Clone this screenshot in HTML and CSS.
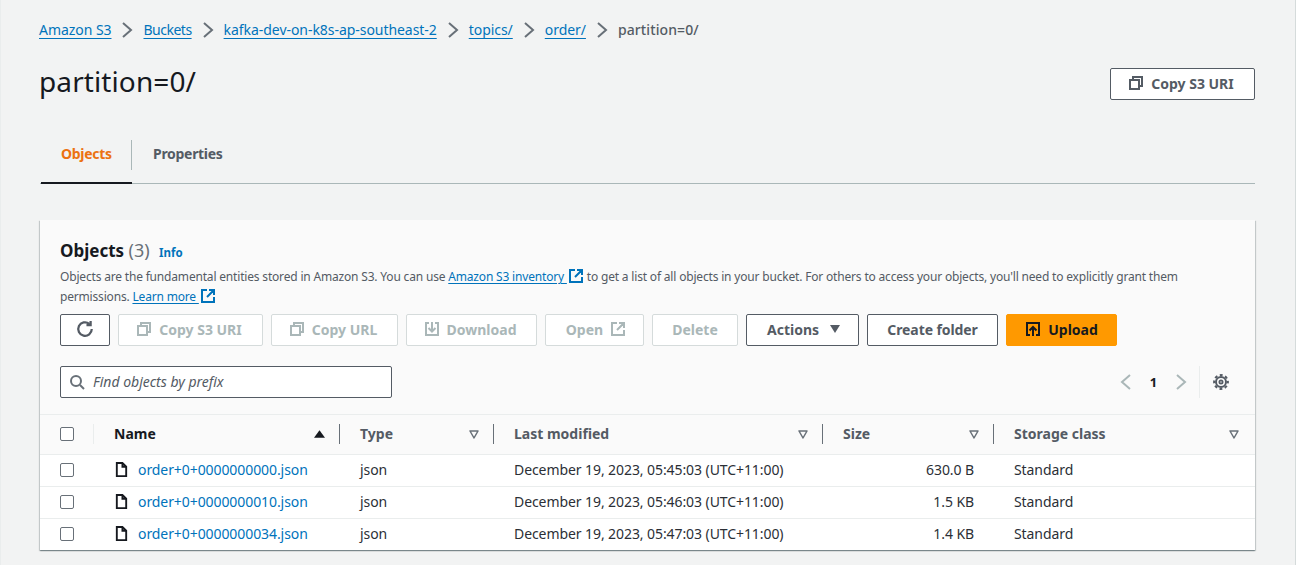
FILE: index.html
```html
<!DOCTYPE html>
<html lang="en">
<head>
    <meta charset="UTF-8">
    <title>partition=0/ - S3 bucket</title>
    <link rel="stylesheet" href="styles.css">
</head>
<body>
    <svg class="sprites" width="0" height="0" aria-hidden="true">
        <symbol id="i-copy" viewBox="0 0 16 16"><path d="M5 5V2h9v9h-3M2 5h9v9H2z" fill="none" stroke="currentColor" stroke-width="2"/></symbol>
        <symbol id="i-ext" viewBox="0 0 16 16"><path d="M7 2H2v12h12V9M9 2h5v5M14 2L7 9" fill="none" stroke="currentColor" stroke-width="2"/></symbol>
        <symbol id="i-down" viewBox="0 0 16 16"><path d="M5 2H2v12h12V2h-3M8 1v9M4.5 7L8 10.5 11.5 7" fill="none" stroke="currentColor" stroke-width="2"/></symbol>
        <symbol id="i-chev" viewBox="0 0 16 16"><path d="M4 1l8 7-8 7" fill="none" stroke="currentColor" stroke-width="2"/></symbol>
        <symbol id="i-sort" viewBox="0 0 12 12"><path d="M2 3h8L6 10z" fill="none" stroke="currentColor" stroke-width="1.5" stroke-linejoin="round"/></symbol>
        <symbol id="i-file" viewBox="0 0 16 16"><path d="M9 1H3v14h10V5zM9 1v4h4" fill="none" stroke="currentColor" stroke-width="2"/></symbol>
    </svg>

    <main class="page">
        <nav class="crumbs">
            <a href="#">Amazon S3</a>
            <svg class="crumb-sep"><use href="#i-chev"/></svg>
            <a class="crumb-narrow" href="#">Buckets</a>
            <svg class="crumb-sep"><use href="#i-chev"/></svg>
            <a href="#">kafka-dev-on-k8s-ap-southeast-2</a>
            <svg class="crumb-sep"><use href="#i-chev"/></svg>
            <a href="#">topics/</a>
            <svg class="crumb-sep"><use href="#i-chev"/></svg>
            <a href="#">order/</a>
            <svg class="crumb-sep"><use href="#i-chev"/></svg>
            <span class="crumb-current">partition=0/</span>
        </nav>

        <header class="title-row">
            <h1>partition=0/</h1>
            <button class="btn btn-title"><svg class="icon"><use href="#i-copy"/></svg>Copy S3 URI</button>
        </header>

        <div class="tabs">
            <a class="tab tab-active" href="#">Objects</a>
            <a class="tab" href="#">Properties</a>
        </div>

        <section class="card">
            <div class="card-head">
                <h2>Objects <span class="count">(3)</span> <a class="info" href="#">Info</a></h2>
                <p class="desc">Objects are the fundamental entities stored in Amazon S3. You can use <a href="#">Amazon S3 inventory <svg class="icon-ext"><use href="#i-ext"/></svg></a> to get a list of all objects in your bucket. For others to access your objects, you'll need to explicitly grant them<br>permissions. <a href="#">Learn more <svg class="icon-ext"><use href="#i-ext"/></svg></a></p>

                <div class="actions">
                    <button class="btn btn-refresh" aria-label="Refresh">
                        <svg class="icon-refresh" viewBox="0 0 16 16"><path d="M14 8a6 6 0 1 1-2.2-4.6M13 0.8V4.5H9.3" fill="none" stroke="currentColor" stroke-width="2"/></svg>
                    </button>
                    <button class="btn btn-off w-uri"><svg class="icon"><use href="#i-copy"/></svg>Copy S3 URI</button>
                    <button class="btn btn-off w-url"><svg class="icon"><use href="#i-copy"/></svg>Copy URL</button>
                    <button class="btn btn-off w-dl"><svg class="icon"><use href="#i-down"/></svg>Download</button>
                    <button class="btn btn-off w-open">Open<svg class="icon icon-after"><use href="#i-ext"/></svg></button>
                    <button class="btn btn-off w-del">Delete</button>
                    <button class="btn w-act">Actions<span class="caret"></span></button>
                    <button class="btn w-folder">Create folder</button>
                    <button class="btn btn-primary w-up">
                        <svg class="icon" viewBox="0 0 16 16"><path d="M5 14H2V2h12v12h-3M8 15V6M4.5 9.5L8 6l3.5 3.5" fill="none" stroke="currentColor" stroke-width="2"/></svg>Upload
                    </button>
                </div>

                <div class="filter-row">
                    <label class="search">
                        <svg class="icon-search" viewBox="0 0 16 16"><path d="M11 11l4 4" stroke="currentColor" stroke-width="2" fill="none"/><circle cx="7" cy="7" r="5" fill="none" stroke="currentColor" stroke-width="2"/></svg>
                        <span>Find objects by prefix</span>
                    </label>
                    <div class="pager">
                        <svg class="pager-arrow flip"><use href="#i-chev"/></svg>
                        <span class="pager-num">1</span>
                        <svg class="pager-arrow"><use href="#i-chev"/></svg>
                        <span class="pager-line"></span>
                        <svg class="gear" viewBox="0 0 16 16" fill="none" stroke="currentColor"><circle cx="8" cy="8" r="5" stroke-width="2"/><circle cx="8" cy="8" r="6.9" stroke-width="2" stroke-dasharray="2.9 2.52" stroke-dashoffset="1.45"/><circle cx="8" cy="8" r="1.6" stroke-width="1.8"/></svg>
                    </div>
                </div>
            </div>

            <table class="objects">
                <colgroup>
                    <col class="c-check"><col class="c-name"><col class="c-type"><col class="c-date"><col class="c-size"><col class="c-class">
                </colgroup>
                <thead>
                    <tr>
                        <th class="cell-check"><span class="check"></span></th>
                        <th class="th-name"><div class="th-inner">Name<svg class="sort-up" viewBox="0 0 12 8"><path d="M6 0l6 8H0z" fill="currentColor"/></svg></div></th>
                        <th><div class="th-inner th-muted">Type<svg class="sort"><use href="#i-sort"/></svg></div></th>
                        <th><div class="th-inner th-muted">Last modified<svg class="sort"><use href="#i-sort"/></svg></div></th>
                        <th><div class="th-inner th-muted">Size<svg class="sort"><use href="#i-sort"/></svg></div></th>
                        <th class="th-last"><div class="th-inner th-muted">Storage class<svg class="sort"><use href="#i-sort"/></svg></div></th>
                    </tr>
                </thead>
                <tbody>
                    <tr>
                        <td class="cell-check"><span class="check"></span></td>
                        <td class="td-name"><svg class="file"><use href="#i-file"/></svg><a href="#">order+0+0000000000.json</a></td>
                        <td>json</td>
                        <td>December 19, 2023, 05:45:03 (UTC+11:00)</td>
                        <td class="num">630.0 B</td>
                        <td>Standard</td>
                    </tr>
                    <tr>
                        <td class="cell-check"><span class="check"></span></td>
                        <td class="td-name"><svg class="file"><use href="#i-file"/></svg><a href="#">order+0+0000000010.json</a></td>
                        <td>json</td>
                        <td>December 19, 2023, 05:46:03 (UTC+11:00)</td>
                        <td class="num">1.5 KB</td>
                        <td>Standard</td>
                    </tr>
                    <tr>
                        <td class="cell-check"><span class="check"></span></td>
                        <td class="td-name"><svg class="file"><use href="#i-file"/></svg><a href="#">order+0+0000000034.json</a></td>
                        <td>json</td>
                        <td>December 19, 2023, 05:47:03 (UTC+11:00)</td>
                        <td class="num">1.4 KB</td>
                        <td>Standard</td>
                    </tr>
                </tbody>
            </table>
        </section>
    </main>
</body>
</html>
```

FILE: styles.css
```css
/* Page */
html, body {
    margin: 0;
    padding: 0;
}
body {
    background-color: #f2f3f3;
    color: #16191f;
    font-family: "Noto Sans", Arial, sans-serif;
    font-size: 14px;
    line-height: 20px;
    height: 565px;
    overflow: hidden;
    box-sizing: border-box;
    border-left: 1px solid #eaeded;
    border-right: 1px solid #d5dbdb;
}
a {
    color: #0073bb;
}
.sprites {
    display: block;
}
.page {
    padding: 20px 40px 0 39px;
}

/* Breadcrumbs */
.crumbs {
    display: flex;
    align-items: center;
    height: 20px;
    margin-left: -1px;
    font-size: 14px;
    letter-spacing: -0.05px;
}
.crumbs a {
    text-underline-offset: 3px;
}
.crumbs .crumb-narrow {
    letter-spacing: -0.5px;
}
.crumb-sep {
    width: 16px;
    height: 16px;
    margin: 0 8px;
    color: #687078;
}
.crumb-current {
    color: #545b64;
    font-weight: 500;
    letter-spacing: 0.1px;
}

/* Title */
.title-row {
    display: flex;
    justify-content: space-between;
    align-items: center;
    margin-top: 28px;
    height: 32px;
}
h1 {
    margin: 0 0 6px -1px;
    font-size: 28px;
    font-weight: 400;
    line-height: 36px;
    letter-spacing: 0.1px;
}

/* Buttons */
.btn {
    display: inline-flex;
    align-items: center;
    justify-content: center;
    box-sizing: border-box;
    height: 32px;
    padding: 0 0 2px;
    border: 1px solid #545b64;
    border-radius: 2px;
    background-color: #fff;
    color: #545b64;
    font-family: inherit;
    font-size: 14px;
    font-weight: 700;
}
.btn-title, .w-uri, .w-url, .w-dl {
    padding-right: 3px;
}
.btn-title {
    width: 145px;
}
.btn-off {
    border-color: #d5dbdb;
    color: #aab7b8;
    background-color: #fff;
}
.btn-primary {
    background-color: #ff9900;
    border-color: #ff9900;
    color: #16191f;
}
.icon {
    width: 16px;
    height: 16px;
    margin-right: 7px;
}
.icon-after {
    margin: 0 0 0 7px;
}

/* Tabs */
.tabs {
    display: flex;
    align-items: center;
    margin-top: 25px;
    height: 58px;
    border-bottom: 1px solid #aab7b8;
}
.tab {
    display: flex;
    align-items: center;
    box-sizing: border-box;
    height: 58px;
    padding: 0 21px;
    color: #545b64;
    font-weight: 700;
    letter-spacing: -0.3px;
    text-decoration: none;
}
.tab-active {
    width: 91px;
    margin: 1px 0 0 1px;
    padding: 0 20px;
    color: #ec7211;
    border-bottom: 2px solid #16191f;
    position: relative;
}
.tab-active::after {
    content: "";
    position: absolute;
    right: 0;
    top: 14px;
    height: 30px;
    border-right: 1px solid #aab7b8;
}

/* Card */
.card {
    margin-top: 36px;
    background-color: #fff;
    box-shadow: 0 1px 1px 0 rgba(0, 28, 36, 0.3), 1px 1px 1px 0 rgba(0, 28, 36, 0.15), -1px 1px 1px 0 rgba(0, 28, 36, 0.15);
}
.card-head {
    background-color: #fafafa;
    padding: 19px 20px 0;
    height: 195px;
    box-sizing: border-box;
    border-bottom: 1px solid #eaeded;
}
h2 {
    margin: 0;
    font-size: 17px;
    font-weight: 700;
    line-height: 22px;
}
.count {
    color: #687078;
    font-size: 18px;
    font-weight: 400;
}
.info {
    margin-left: 5px;
    font-size: 11.5px;
    font-weight: 700;
    text-decoration: none;
}
.desc {
    margin: 3px 0 0;
    color: #545b64;
    font-size: 12px;
    line-height: 20px;
    letter-spacing: -0.18px;
}
.desc a {
    text-underline-offset: 2px;
}
.icon-ext {
    width: 16px;
    height: 16px;
    margin-left: 1px;
    vertical-align: -3px;
}

/* Action buttons */
.actions {
    display: flex;
    gap: 8px;
    margin-top: 7px;
}
.btn-refresh {
    width: 50px;
}
.icon-refresh {
    width: 18px;
    height: 18px;
}
.w-uri { width: 145px; }
.w-url { width: 127px; }
.w-dl { width: 131px; }
.w-open { width: 99px; padding-left: 3px; }
.w-del { width: 86px; }
.w-act { width: 113px; padding-left: 2px; }
.w-folder { width: 131px; letter-spacing: -0.1px; }
.w-up { width: 111px; }
.caret {
    width: 0;
    height: 0;
    margin-left: 11px;
    border-left: 5px solid transparent;
    border-right: 5px solid transparent;
    border-top: 8px solid #545b64;
}

/* Search and pager */
.filter-row {
    display: flex;
    justify-content: space-between;
    align-items: center;
    margin-top: 20px;
}
.search {
    display: flex;
    align-items: center;
    box-sizing: border-box;
    width: 332px;
    height: 32px;
    padding-left: 8px;
    border: 1px solid #545b64;
    border-radius: 2px;
    background-color: #fff;
    color: #545b64;
    font-size: 14px;
    font-style: italic;
}
.icon-search {
    width: 16px;
    height: 16px;
    margin-right: 8px;
    color: #687078;
}
.pager {
    display: flex;
    align-items: center;
    height: 32px;
    margin-right: 6px;
}
.pager-arrow {
    width: 16px;
    height: 16px;
    color: #aab7b8;
}
.flip {
    transform: scaleX(-1);
}
.pager-num {
    width: 39px;
    text-align: center;
    font-weight: 700;
    font-size: 13px;
    color: #16191f;
}
.pager-line {
    height: 32px;
    margin: 0 13px 0 10px;
    border-left: 1px solid #eaeded;
}
.gear {
    width: 16px;
    height: 16px;
    color: #545b64;
}

/* Objects table */
.objects {
    width: 100%;
    table-layout: fixed;
    border-collapse: collapse;
    background-color: #fff;
}
.c-check { width: 54px; }
.c-name { width: 246px; }
.c-type { width: 154px; }
.c-date { width: 329px; }
.c-size { width: 171px; }
.objects th {
    height: 37px;
    padding: 0 0 2px;
    text-align: left;
    background-color: #fafafa;
    border-bottom: 1px solid #eaeded;
    font-weight: 700;
}
.th-inner {
    display: flex;
    align-items: center;
    justify-content: space-between;
    box-sizing: border-box;
    height: 20px;
    padding: 0 13px 0 20px;
    border-right: 1px solid #687078;
}
.th-name .th-inner {
    padding: 0 14px 0 20px;
}
.th-last .th-inner {
    border-right: 0;
    padding-right: 15px;
}
.th-muted {
    color: #545b64;
}
.sort {
    width: 12px;
    height: 12px;
    color: #687078;
}
.sort-up {
    width: 11px;
    height: 8px;
    color: #16191f;
}
.objects td {
    height: 29px;
    padding: 0 0 2px 20px;
    border-bottom: 1px solid #eaeded;
    color: #2b2f36;
    letter-spacing: -0.08px;
    white-space: nowrap;
}
.objects tr:last-child td {
    border-bottom: 0;
}
.objects td.cell-check, .objects th.cell-check {
    padding: 0 0 2px 20px;
    position: relative;
}
.objects th.cell-check::after {
    content: "";
    position: absolute;
    right: 0;
    top: 9px;
    height: 20px;
    border-right: 1px solid #eaeded;
}
.check {
    display: block;
    box-sizing: border-box;
    width: 14px;
    height: 14px;
    border: 1px solid #687078;
    border-radius: 2px;
    background-color: #fff;
}
.objects td.num {
    padding: 0 20px 2px 0;
    text-align: right;
}
.td-name a {
    text-decoration: none;
}
.file {
    width: 15px;
    height: 15px;
    margin-right: 9px;
    vertical-align: -2px;
    color: #16191f;
}
```
